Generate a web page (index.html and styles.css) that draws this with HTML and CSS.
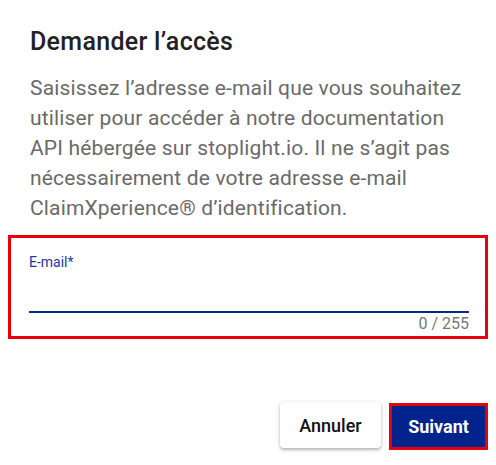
FILE: index.html
```html
<!DOCTYPE html>
<html lang="fr">
<head>
<meta charset="utf-8">
<title>Demander l’accès</title>
<link rel="stylesheet" href="styles.css">
</head>
<body>
<div class="dialog">
  <h2 class="title">Demander l’accès</h2>
  <p class="text">Saisissez l’adresse e-mail que vous souhaitez utiliser pour accéder à notre documentation API hébergée sur stoplight.io. Il ne s’agit pas nécessairement de votre adresse e-mail ClaimXperience® d’identification.</p>
  <div class="field-box">
    <label class="label" for="email">E-mail*</label>
    <input class="input" id="email" type="email">
    <div class="counter">0 / 255</div>
  </div>
  <div class="actions">
    <button class="btn btn-cancel" type="button">Annuler</button>
    <button class="btn btn-next" type="button">Suivant</button>
  </div>
</div>
</body>
</html>
```
FILE: styles.css
```css
* { box-sizing: border-box; }
html, body { margin: 0; padding: 0; background: #fff; }
body {
  font-family: Roboto, "Liberation Sans", Arial, sans-serif;
  width: 496px;
  height: 465px;
  overflow: hidden;
}
.dialog {
  display: flex;
  flex-direction: column;
}
.title {
  margin: 26px 0 0 30px;
  font-size: 25px;
  font-weight: 500;
  line-height: 32px;
  letter-spacing: 0.3px;
  color: #222222;
}
.text {
  margin: 15px 30px 0 30px;
  font-size: 21px;
  line-height: 30px;
  letter-spacing: 0.16px;
  color: #6a6a6a;
}
.field-box {
  margin: 12px 8px 0 8px;
  height: 104px;
  border: 3px solid #e8000b;
  padding: 16px 16px 3px 18px;
  display: flex;
  flex-direction: column;
}
.label {
  font-size: 14px;
  line-height: 16px;
  color: #23399b;
}
.input {
  height: 43px;
  border: none;
  border-bottom: 2px solid #0b2789;
  outline: none;
  background: transparent;
  font: inherit;
  padding: 0;
}
.counter {
  margin-top: 1px;
  font-size: 16px;
  line-height: 19px;
  color: #777777;
  text-align: right;
}
.actions {
  margin: 63px 8px 0 0;
  display: flex;
  justify-content: flex-end;
  align-items: flex-start;
  gap: 8px;
}
.btn {
  font-family: Roboto, "Liberation Sans", Arial, sans-serif;
  font-size: 18px;
  cursor: pointer;
  border-radius: 4px;
}
.btn-cancel {
  width: 101px;
  height: 46px;
  border: none;
  background: #fff;
  color: #111;
  font-weight: 500;
  box-shadow: 0 2px 3px rgba(0,0,0,0.22), 0 1px 5px rgba(0,0,0,0.12);
}
.btn-next {
  margin-top: 1px;
  width: 99px;
  height: 47px;
  border: 3px solid #e8000b;
  border-radius: 0;
  background: #00238c;
  color: #fff;
  font-weight: 700;
}
```
